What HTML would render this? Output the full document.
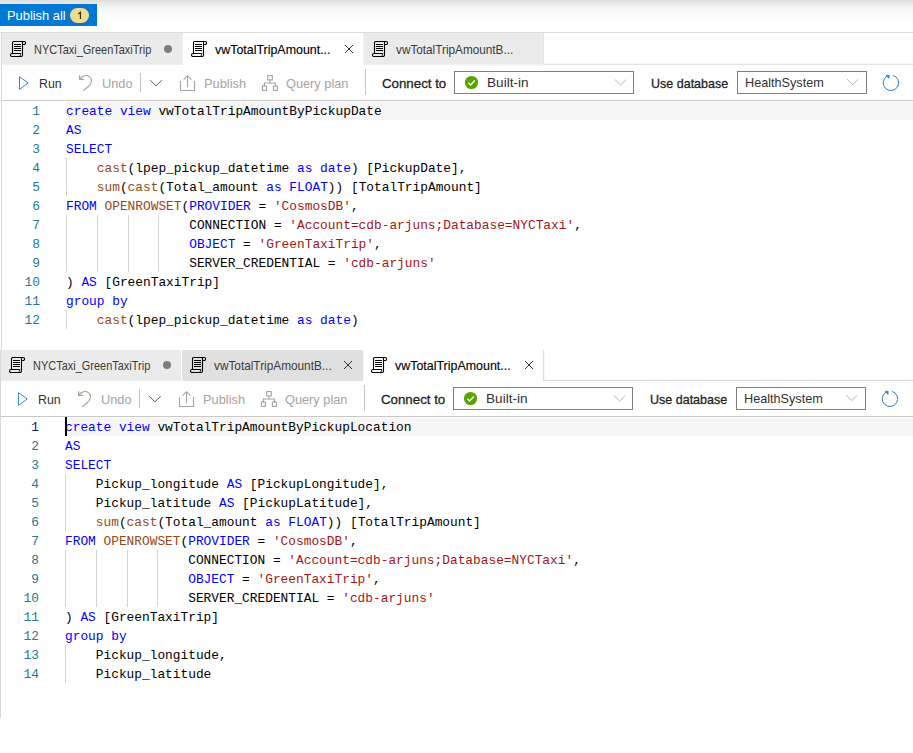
<!DOCTYPE html>
<html><head><meta charset="utf-8"><title>Synapse SQL scripts</title>
<style>
html,body{margin:0;padding:0;background:#fff}
body{width:913px;height:753px;position:relative;overflow:hidden;font-family:"Liberation Sans", sans-serif}
.panel{position:absolute;width:914px;height:0}
.t{position:absolute;white-space:pre;line-height:normal;transform-origin:0 0;font-family:"Liberation Sans", sans-serif}
.i{position:absolute;overflow:visible}
.hl{position:absolute;height:1px}
.vl{position:absolute;width:1px}
.tab{position:absolute;top:33px;height:32px}
.cur{position:absolute;height:19px;background:#f6f6f6}
.ln{position:absolute;left:0;width:41.455px;text-align:right;height:19px;line-height:19px;font-family:"Liberation Mono", monospace;font-size:13.3px;color:#237893;transform-origin:0 0;transform:translateY(0.95px) scaleX(0.9649);white-space:pre}
.cl{position:absolute;left:66px;height:19px;line-height:19px;font-family:"Liberation Mono", monospace;font-size:13.3px;color:#000;transform-origin:0 0;transform:translateY(0.95px) scaleX(0.9649);white-space:pre}
.k{color:#0000ff}.f{color:#934a18}.s{color:#a31515}
</style></head>
<body>
<div style="position:absolute;left:0;top:0;width:913px;height:22px;background:linear-gradient(#dedede 0px,#ebebeb 4px,#f4f4f4 8px,#fafafa 12px,#fefefe 18px,#ffffff 22px)"></div>
<div style="position:absolute;left:0;top:4px;width:97px;height:22px;background:#0078d4"></div>
<div style="position:absolute;left:70px;top:8px;width:19px;height:15px;border-radius:8px;background:#f2dc8c"></div>
<svg class="i" style="left:70px;top:8px" width="19" height="15" viewBox="70 8 19 15" fill="none"><path d="M78.3 13.9L80.45 12.2V18.9" stroke="#2f2a22" stroke-width="1.25" stroke-linejoin="miter"/></svg>
<div class="panel" style="left:0px;top:0px">
<div class="hl" style="left:0;top:32px;width:914px;background:#dcdcdc"></div>
<div class="vl" style="left:1px;top:33px;height:317px;background:#dadada"></div>
<svg class="i" style="left:0;top:33px" width="913" height="33" viewBox="0 33 913 33"><rect x="2" y="33" width="180.67" height="31.8" fill="#ebebeb"/><rect x="363.33" y="33" width="180.4" height="31.8" fill="#ebebeb"/><rect x="543" y="33" width="0.8" height="31.5" fill="#e2e2e2"/><rect x="543.8" y="63.8" width="370" height="1" fill="#dcdcdc"/></svg>
<svg class="i" style="left:10px;top:41px" width="17" height="17" viewBox="0 0 17 17" fill="none" stroke="#000" stroke-width="1.1"><path d="M2.5 12.5V1.6a1.1 1.1 0 0 1 1.1-1.1H14.1a1.5 1.5 0 0 1 0 3H12.5"/><path d="M12.5 0.5V14a1.5 1.5 0 0 1-1.5 1.5H2a1.5 1.5 0 0 1 0-3H10.8"/><path d="M4 3.5H11M4 5.5H11M4 7.5H11M4 9.5H11"/><path d="M10.9 12.5L9.8 15.5" stroke-width="0.8"/></svg>
<svg class="i" style="left:191px;top:41px" width="17" height="17" viewBox="0 0 17 17" fill="none" stroke="#000" stroke-width="1.1"><path d="M2.5 12.5V1.6a1.1 1.1 0 0 1 1.1-1.1H14.1a1.5 1.5 0 0 1 0 3H12.5"/><path d="M12.5 0.5V14a1.5 1.5 0 0 1-1.5 1.5H2a1.5 1.5 0 0 1 0-3H10.8"/><path d="M4 3.5H11M4 5.5H11M4 7.5H11M4 9.5H11"/><path d="M10.9 12.5L9.8 15.5" stroke-width="0.8"/></svg>
<svg class="i" style="left:372px;top:41px" width="17" height="17" viewBox="0 0 17 17" fill="none" stroke="#000" stroke-width="1.1"><path d="M2.5 12.5V1.6a1.1 1.1 0 0 1 1.1-1.1H14.1a1.5 1.5 0 0 1 0 3H12.5"/><path d="M12.5 0.5V14a1.5 1.5 0 0 1-1.5 1.5H2a1.5 1.5 0 0 1 0-3H10.8"/><path d="M4 3.5H11M4 5.5H11M4 7.5H11M4 9.5H11"/><path d="M10.9 12.5L9.8 15.5" stroke-width="0.8"/></svg>
<div style="position:absolute;left:163.7px;top:44.7px;width:8.6px;height:8.6px;border-radius:50%;background:#7f7d7c"></div>
<svg class="i" style="left:344px;top:44px" width="10" height="10" viewBox="0 0 10 10" fill="none" stroke="#323130" stroke-width="1"><path d="M1 1L9 9M9 1L1 9"/></svg>
<svg class="i" style="left:0;top:65px" width="913" height="36" viewBox="0 65 913 36" fill="none" stroke-width="1"><path d="M19.5 76.6V89.4L28.2 83Z" stroke="#2b7fd3" stroke-width="0.95" stroke-linejoin="miter"/><g stroke="#ae9f90" stroke-width="1.15"><path d="M79.6 75.2V79.4H84"/><path d="M79.8 79.2C82.3 75.6 86.6 74.4 89.4 76.6C92.4 79 92 83.2 88.8 86.2L83.2 90.9"/></g><path d="M140.5 73V92" stroke="#c8c6c4"/><path d="M150.2 80.2L156 85.8L161.8 80.2" stroke="#5f5d5b" stroke-width="1"/><g stroke="#a6a4a2" stroke-width="1.1"><path d="M180.5 81V90.5H194.5V81"/><path d="M187.5 87.2V75.8M183.6 79.6L187.5 75.7L191.4 79.6"/></g><g stroke="#a6a4a2" stroke-width="1.1"><rect x="267.7" y="75.6" width="4.6" height="4.3"/><rect x="262.4" y="86.1" width="4" height="4.3"/><rect x="273.4" y="86.1" width="4" height="4.3"/><path d="M270 80V83M264.4 86V83H275.4V86"/></g><path d="M365.5 69V95" stroke="#c8c6c4"/><rect x="454.5" y="71.5" width="179" height="22" stroke="#807e7c" fill="#fff"/><circle cx="471.5" cy="82.5" r="6.6" fill="#57a300" stroke="none"/><path d="M468.4 82.8L470.6 85L474.8 80.4" stroke="#fff" stroke-width="1.5"/><path d="M615 79.6L620.6 85L626.2 79.6" stroke="#b1afad" stroke-width="0.95"/><rect x="737.5" y="71.5" width="129" height="22" stroke="#807e7c" fill="#fff"/><path d="M847 79.2L852.6 84.6L858.2 79.2" stroke="#b1afad" stroke-width="0.95"/><g stroke="#1a78d2" stroke-width="0.95"><path d="M893 75.4A7.7 7.7 0 1 1 887 76.2"/><path d="M886 75.3H889.2V78.4Z" fill="#1a78d2" stroke-width="0.5"/></g></svg>
<div class="hl" style="left:2px;top:100px;width:912px;background:#cbc9c7"></div>
<div class="cur" style="left:66px;top:102px;width:848px;height:18px"></div><div class="hl" style="left:66px;top:101px;width:848px;background:#fbfbfb"></div>
<div class="ln" style="top:101px">1</div>
<div class="cl" style="top:101px"><span class="k">create</span> <span class="k">view</span> vwTotalTripAmountByPickupDate</div>
<div class="ln" style="top:120px">2</div>
<div class="cl" style="top:120px"><span class="k">AS</span></div>
<div class="ln" style="top:139px">3</div>
<div class="cl" style="top:139px"><span class="k">SELECT</span></div>
<div class="ln" style="top:158px">4</div>
<div class="vl" style="left:66.0px;top:158px;height:19px;background:#d3d3d3"></div>
<div class="cl" style="top:158px">    <span class="f">cast</span>(lpep_pickup_datetime <span class="k">as</span> <span class="k">date</span>) [PickupDate],</div>
<div class="ln" style="top:177px">5</div>
<div class="vl" style="left:66.0px;top:177px;height:19px;background:#d3d3d3"></div>
<div class="cl" style="top:177px">    <span class="f">sum</span>(<span class="f">cast</span>(Total_amount <span class="k">as</span> <span class="k">FLOAT</span>)) [TotalTripAmount]</div>
<div class="ln" style="top:196px">6</div>
<div class="cl" style="top:196px"><span class="k">FROM</span> <span class="f">OPENROWSET</span>(<span class="k">PROVIDER</span> = <span class="s">&#x27;CosmosDB&#x27;</span>,</div>
<div class="ln" style="top:215px">7</div>
<div class="vl" style="left:66.0px;top:215px;height:19px;background:#d3d3d3"></div>
<div class="vl" style="left:96.8px;top:215px;height:19px;background:#d3d3d3"></div>
<div class="vl" style="left:127.6px;top:215px;height:19px;background:#d3d3d3"></div>
<div class="vl" style="left:158.4px;top:215px;height:19px;background:#d3d3d3"></div>
<div class="cl" style="top:215px">                CONNECTION = <span class="s">&#x27;Account=cdb-arjuns;Database=NYCTaxi&#x27;</span>,</div>
<div class="ln" style="top:234px">8</div>
<div class="vl" style="left:66.0px;top:234px;height:19px;background:#d3d3d3"></div>
<div class="vl" style="left:96.8px;top:234px;height:19px;background:#d3d3d3"></div>
<div class="vl" style="left:127.6px;top:234px;height:19px;background:#d3d3d3"></div>
<div class="vl" style="left:158.4px;top:234px;height:19px;background:#d3d3d3"></div>
<div class="cl" style="top:234px">                <span class="k">OBJECT</span> = <span class="s">&#x27;GreenTaxiTrip&#x27;</span>,</div>
<div class="ln" style="top:253px">9</div>
<div class="vl" style="left:66.0px;top:253px;height:19px;background:#d3d3d3"></div>
<div class="vl" style="left:96.8px;top:253px;height:19px;background:#d3d3d3"></div>
<div class="vl" style="left:127.6px;top:253px;height:19px;background:#d3d3d3"></div>
<div class="vl" style="left:158.4px;top:253px;height:19px;background:#d3d3d3"></div>
<div class="cl" style="top:253px">                SERVER_CREDENTIAL = <span class="s">&#x27;cdb-arjuns&#x27;</span></div>
<div class="ln" style="top:272px">10</div>
<div class="cl" style="top:272px">) <span class="k">AS</span> [GreenTaxiTrip]</div>
<div class="ln" style="top:291px">11</div>
<div class="cl" style="top:291px"><span class="k">group</span> <span class="k">by</span></div>
<div class="ln" style="top:310px">12</div>
<div class="vl" style="left:66.0px;top:310px;height:19px;background:#d3d3d3"></div>
<div class="cl" style="top:310px">    <span class="f">cast</span>(lpep_pickup_datetime <span class="k">as</span> <span class="k">date</span>)</div>

</div>
<div class="panel" style="left:-1px;top:316px">
<div class="vl" style="left:1px;top:34px;height:368px;background:#d9d9d9"></div>
<svg class="i" style="left:0;top:34px" width="913" height="32" viewBox="0 34 913 32"><rect x="2" y="34" width="180" height="31" fill="#ebebeb"/><rect x="183.2" y="34" width="181" height="31" fill="#e0e0e0"/><rect x="544.2" y="34" width="1" height="31" fill="#d5d5d5"/><rect x="544.2" y="63.8" width="370" height="1" fill="#d8d8d8"/></svg>
<svg class="i" style="left:10px;top:41px" width="17" height="17" viewBox="0 0 17 17" fill="none" stroke="#000" stroke-width="1.1"><path d="M2.5 12.5V1.6a1.1 1.1 0 0 1 1.1-1.1H14.1a1.5 1.5 0 0 1 0 3H12.5"/><path d="M12.5 0.5V14a1.5 1.5 0 0 1-1.5 1.5H2a1.5 1.5 0 0 1 0-3H10.8"/><path d="M4 3.5H11M4 5.5H11M4 7.5H11M4 9.5H11"/><path d="M10.9 12.5L9.8 15.5" stroke-width="0.8"/></svg>
<svg class="i" style="left:191px;top:41px" width="17" height="17" viewBox="0 0 17 17" fill="none" stroke="#000" stroke-width="1.1"><path d="M2.5 12.5V1.6a1.1 1.1 0 0 1 1.1-1.1H14.1a1.5 1.5 0 0 1 0 3H12.5"/><path d="M12.5 0.5V14a1.5 1.5 0 0 1-1.5 1.5H2a1.5 1.5 0 0 1 0-3H10.8"/><path d="M4 3.5H11M4 5.5H11M4 7.5H11M4 9.5H11"/><path d="M10.9 12.5L9.8 15.5" stroke-width="0.8"/></svg>
<svg class="i" style="left:372px;top:41px" width="17" height="17" viewBox="0 0 17 17" fill="none" stroke="#000" stroke-width="1.1"><path d="M2.5 12.5V1.6a1.1 1.1 0 0 1 1.1-1.1H14.1a1.5 1.5 0 0 1 0 3H12.5"/><path d="M12.5 0.5V14a1.5 1.5 0 0 1-1.5 1.5H2a1.5 1.5 0 0 1 0-3H10.8"/><path d="M4 3.5H11M4 5.5H11M4 7.5H11M4 9.5H11"/><path d="M10.9 12.5L9.8 15.5" stroke-width="0.8"/></svg>
<div style="position:absolute;left:163.8px;top:44.7px;width:8.6px;height:8.6px;border-radius:50%;background:#7f7d7c"></div>
<svg class="i" style="left:344px;top:44px" width="10" height="10" viewBox="0 0 10 10" fill="none" stroke="#323130" stroke-width="1"><path d="M1 1L9 9M9 1L1 9"/></svg>
<svg class="i" style="left:525px;top:44px" width="10" height="10" viewBox="0 0 10 10" fill="none" stroke="#323130" stroke-width="1"><path d="M1 1L9 9M9 1L1 9"/></svg>
<svg class="i" style="left:0;top:65px" width="913" height="36" viewBox="0 65 913 36" fill="none" stroke-width="1"><path d="M19.5 76.6V89.4L28.2 83Z" stroke="#2b7fd3" stroke-width="0.95" stroke-linejoin="miter"/><g stroke="#ae9f90" stroke-width="1.15"><path d="M79.6 75.2V79.4H84"/><path d="M79.8 79.2C82.3 75.6 86.6 74.4 89.4 76.6C92.4 79 92 83.2 88.8 86.2L83.2 90.9"/></g><path d="M140.5 73V92" stroke="#c8c6c4"/><path d="M150.2 80.2L156 85.8L161.8 80.2" stroke="#5f5d5b" stroke-width="1"/><g stroke="#a6a4a2" stroke-width="1.1"><path d="M180.5 81V90.5H194.5V81"/><path d="M187.5 87.2V75.8M183.6 79.6L187.5 75.7L191.4 79.6"/></g><g stroke="#a6a4a2" stroke-width="1.1"><rect x="267.7" y="75.6" width="4.6" height="4.3"/><rect x="262.4" y="86.1" width="4" height="4.3"/><rect x="273.4" y="86.1" width="4" height="4.3"/><path d="M270 80V83M264.4 86V83H275.4V86"/></g><path d="M365.5 69V95" stroke="#c8c6c4"/><rect x="454.5" y="71.5" width="179" height="22" stroke="#807e7c" fill="#fff"/><circle cx="471.5" cy="82.5" r="6.6" fill="#57a300" stroke="none"/><path d="M468.4 82.8L470.6 85L474.8 80.4" stroke="#fff" stroke-width="1.5"/><path d="M615 79.6L620.6 85L626.2 79.6" stroke="#b1afad" stroke-width="0.95"/><rect x="737.5" y="71.5" width="129" height="22" stroke="#807e7c" fill="#fff"/><path d="M847 79.2L852.6 84.6L858.2 79.2" stroke="#b1afad" stroke-width="0.95"/><g stroke="#1a78d2" stroke-width="0.95"><path d="M893 75.4A7.7 7.7 0 1 1 887 76.2"/><path d="M886 75.3H889.2V78.4Z" fill="#1a78d2" stroke-width="0.5"/></g></svg>
<div class="hl" style="left:2px;top:100px;width:912px;background:#cbc9c7"></div>
<div class="cur" style="left:66px;top:102px;width:848px;height:18px"></div><div class="hl" style="left:66px;top:101px;width:848px;background:#fbfbfb"></div>
<div class="ln" style="top:101px;color:#0b216f">1</div>
<div class="cl" style="top:101px"><span class="k">create</span> <span class="k">view</span> vwTotalTripAmountByPickupLocation</div>
<div class="ln" style="top:120px">2</div>
<div class="cl" style="top:120px"><span class="k">AS</span></div>
<div class="ln" style="top:139px">3</div>
<div class="cl" style="top:139px"><span class="k">SELECT</span></div>
<div class="ln" style="top:158px">4</div>
<div class="vl" style="left:66.0px;top:158px;height:19px;background:#d3d3d3"></div>
<div class="cl" style="top:158px">    Pickup_longitude <span class="k">AS</span> [PickupLongitude],</div>
<div class="ln" style="top:177px">5</div>
<div class="vl" style="left:66.0px;top:177px;height:19px;background:#d3d3d3"></div>
<div class="cl" style="top:177px">    Pickup_latitude <span class="k">AS</span> [PickupLatitude],</div>
<div class="ln" style="top:196px">6</div>
<div class="vl" style="left:66.0px;top:196px;height:19px;background:#d3d3d3"></div>
<div class="cl" style="top:196px">    <span class="f">sum</span>(<span class="f">cast</span>(Total_amount <span class="k">as</span> <span class="k">FLOAT</span>)) [TotalTripAmount]</div>
<div class="ln" style="top:215px">7</div>
<div class="cl" style="top:215px"><span class="k">FROM</span> <span class="f">OPENROWSET</span>(<span class="k">PROVIDER</span> = <span class="s">&#x27;CosmosDB&#x27;</span>,</div>
<div class="ln" style="top:234px">8</div>
<div class="vl" style="left:66.0px;top:234px;height:19px;background:#d3d3d3"></div>
<div class="vl" style="left:96.8px;top:234px;height:19px;background:#d3d3d3"></div>
<div class="vl" style="left:127.6px;top:234px;height:19px;background:#d3d3d3"></div>
<div class="vl" style="left:158.4px;top:234px;height:19px;background:#d3d3d3"></div>
<div class="cl" style="top:234px">                CONNECTION = <span class="s">&#x27;Account=cdb-arjuns;Database=NYCTaxi&#x27;</span>,</div>
<div class="ln" style="top:253px">9</div>
<div class="vl" style="left:66.0px;top:253px;height:19px;background:#d3d3d3"></div>
<div class="vl" style="left:96.8px;top:253px;height:19px;background:#d3d3d3"></div>
<div class="vl" style="left:127.6px;top:253px;height:19px;background:#d3d3d3"></div>
<div class="vl" style="left:158.4px;top:253px;height:19px;background:#d3d3d3"></div>
<div class="cl" style="top:253px">                <span class="k">OBJECT</span> = <span class="s">&#x27;GreenTaxiTrip&#x27;</span>,</div>
<div class="ln" style="top:272px">10</div>
<div class="vl" style="left:66.0px;top:272px;height:19px;background:#d3d3d3"></div>
<div class="vl" style="left:96.8px;top:272px;height:19px;background:#d3d3d3"></div>
<div class="vl" style="left:127.6px;top:272px;height:19px;background:#d3d3d3"></div>
<div class="vl" style="left:158.4px;top:272px;height:19px;background:#d3d3d3"></div>
<div class="cl" style="top:272px">                SERVER_CREDENTIAL = <span class="s">&#x27;cdb-arjuns&#x27;</span></div>
<div class="ln" style="top:291px">11</div>
<div class="cl" style="top:291px">) <span class="k">AS</span> [GreenTaxiTrip]</div>
<div class="ln" style="top:310px">12</div>
<div class="cl" style="top:310px"><span class="k">group</span> <span class="k">by</span></div>
<div class="ln" style="top:329px">13</div>
<div class="vl" style="left:66.0px;top:329px;height:19px;background:#d3d3d3"></div>
<div class="cl" style="top:329px">    Pickup_longitude,</div>
<div class="ln" style="top:348px">14</div>
<div class="vl" style="left:66.0px;top:348px;height:19px;background:#d3d3d3"></div>
<div class="cl" style="top:348px">    Pickup_latitude</div>
<div style="position:absolute;left:66px;top:101px;width:2px;height:19px;background:#000"></div>

</div>
<span class="t" style="left:7.19px;top:8.42px;font-size:12.8px;font-weight:400;color:#fff;transform:scaleX(1.0055)">Publish all</span><span class="t" style="left:33.73px;top:42.60px;font-size:12.6px;font-weight:400;color:#3b3a39;transform:scaleX(0.8712)">NYCTaxi_GreenTaxiTrip</span><span class="t" style="left:215.40px;top:42.60px;font-size:12.6px;font-weight:400;color:#000;-webkit-text-stroke:0.12px #000;transform:scaleX(0.9862)">vwTotalTripAmount...</span><span class="t" style="left:396.20px;top:42.60px;font-size:12.6px;font-weight:400;color:#3b3a39;transform:scaleX(0.9343)">vwTotalTripAmountB...</span><span class="t" style="left:38.73px;top:76.42px;font-size:12.8px;font-weight:400;color:#323130;transform:scaleX(0.9661)">Run</span><span class="t" style="left:102.20px;top:76.42px;font-size:12.8px;font-weight:400;color:#a6a4a2;transform:scaleX(1.0008)">Undo</span><span class="t" style="left:203.60px;top:76.42px;font-size:12.8px;font-weight:400;color:#a6a4a2;transform:scaleX(1.0011)">Publish</span><span class="t" style="left:286.00px;top:76.42px;font-size:12.8px;font-weight:400;color:#a6a4a2;transform:scaleX(0.9971)">Query plan</span><span class="t" style="left:381.80px;top:76.42px;font-size:12.8px;font-weight:400;color:#201f1e;-webkit-text-stroke:0.28px #201f1e;transform:scaleX(1.0377)">Connect to</span><span class="t" style="left:486.94px;top:75.42px;font-size:12.8px;font-weight:400;color:#323130;transform:scaleX(1.0632)">Built-in</span><span class="t" style="left:651.20px;top:76.42px;font-size:12.8px;font-weight:400;color:#201f1e;-webkit-text-stroke:0.28px #201f1e;transform:scaleX(0.9778)">Use database</span><span class="t" style="left:745.21px;top:75.42px;font-size:12.8px;font-weight:400;color:#323130;transform:scaleX(0.9885)">HealthSystem</span><span class="t" style="left:32.73px;top:358.60px;font-size:12.6px;font-weight:400;color:#3b3a39;transform:scaleX(0.8712)">NYCTaxi_GreenTaxiTrip</span><span class="t" style="left:214.30px;top:358.60px;font-size:12.6px;font-weight:400;color:#3b3a39;transform:scaleX(0.9375)">vwTotalTripAmountB...</span><span class="t" style="left:395.40px;top:358.60px;font-size:12.6px;font-weight:400;color:#000;-webkit-text-stroke:0.12px #000;transform:scaleX(0.9879)">vwTotalTripAmount...</span><span class="t" style="left:37.73px;top:392.42px;font-size:12.8px;font-weight:400;color:#323130;transform:scaleX(0.9661)">Run</span><span class="t" style="left:101.20px;top:392.42px;font-size:12.8px;font-weight:400;color:#a6a4a2;transform:scaleX(1.0008)">Undo</span><span class="t" style="left:202.60px;top:392.42px;font-size:12.8px;font-weight:400;color:#a6a4a2;transform:scaleX(1.0011)">Publish</span><span class="t" style="left:285.00px;top:392.42px;font-size:12.8px;font-weight:400;color:#a6a4a2;transform:scaleX(0.9971)">Query plan</span><span class="t" style="left:380.80px;top:392.42px;font-size:12.8px;font-weight:400;color:#201f1e;-webkit-text-stroke:0.28px #201f1e;transform:scaleX(1.0377)">Connect to</span><span class="t" style="left:485.94px;top:391.42px;font-size:12.8px;font-weight:400;color:#323130;transform:scaleX(1.0632)">Built-in</span><span class="t" style="left:650.20px;top:392.42px;font-size:12.8px;font-weight:400;color:#201f1e;-webkit-text-stroke:0.28px #201f1e;transform:scaleX(0.9778)">Use database</span><span class="t" style="left:744.21px;top:391.42px;font-size:12.8px;font-weight:400;color:#323130;transform:scaleX(0.9885)">HealthSystem</span>
</body></html>
